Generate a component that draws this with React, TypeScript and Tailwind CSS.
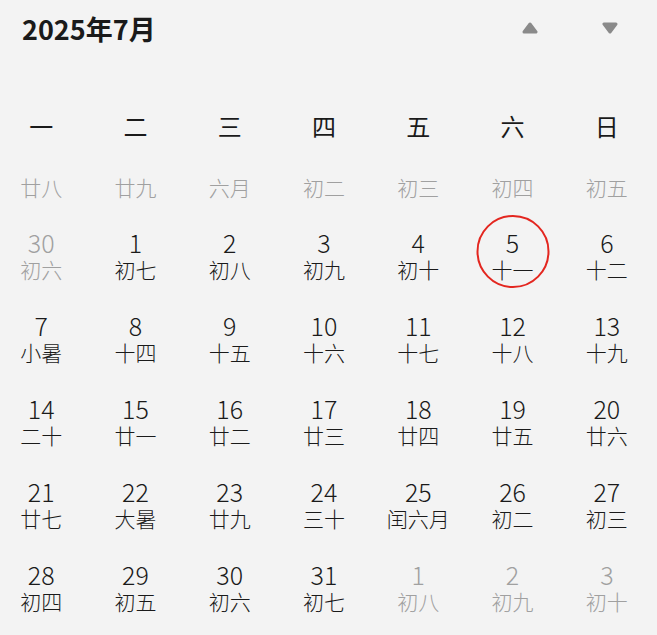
import React from "react";

type Day = { d: number; l: string; muted?: boolean; today?: boolean };

const weekdays = ["一", "二", "三", "四", "五", "六", "日"];
const prevLunar = ["廿八", "廿九", "六月", "初二", "初三", "初四", "初五"];

const weeks: Day[][] = [
  [
    { d: 30, l: "初六", muted: true },
    { d: 1, l: "初七" },
    { d: 2, l: "初八" },
    { d: 3, l: "初九" },
    { d: 4, l: "初十" },
    { d: 5, l: "十一", today: true },
    { d: 6, l: "十二" },
  ],
  [
    { d: 7, l: "小暑" },
    { d: 8, l: "十四" },
    { d: 9, l: "十五" },
    { d: 10, l: "十六" },
    { d: 11, l: "十七" },
    { d: 12, l: "十八" },
    { d: 13, l: "十九" },
  ],
  [
    { d: 14, l: "二十" },
    { d: 15, l: "廿一" },
    { d: 16, l: "廿二" },
    { d: 17, l: "廿三" },
    { d: 18, l: "廿四" },
    { d: 19, l: "廿五" },
    { d: 20, l: "廿六" },
  ],
  [
    { d: 21, l: "廿七" },
    { d: 22, l: "大暑" },
    { d: 23, l: "廿九" },
    { d: 24, l: "三十" },
    { d: 25, l: "闰六月" },
    { d: 26, l: "初二" },
    { d: 27, l: "初三" },
  ],
  [
    { d: 28, l: "初四" },
    { d: 29, l: "初五" },
    { d: 30, l: "初六" },
    { d: 31, l: "初七" },
    { d: 1, l: "初八", muted: true },
    { d: 2, l: "初九", muted: true },
    { d: 3, l: "初十", muted: true },
  ],
];

const font = { fontFamily: '"Noto Sans CJK SC", "Noto Sans", sans-serif' };

export default function App() {
  return (
    <div
      className="w-[657px] h-[635px] overflow-hidden bg-[#f3f3f3] text-[#1a1a1a]"
      style={font}
    >
      {/* Header */}
      <div className="h-[56px] flex items-center justify-between pl-[22px] pr-[39px]">
        <div className="text-[27px] leading-none font-semibold">
          2025年7月
        </div>
        <div className="flex items-center gap-[64px]">
          <svg width="16" height="12" viewBox="0 0 16 12">
            <polygon
              points="8,2 14,10 2,10"
              fill="#8a8a8a"
              stroke="#8a8a8a"
              strokeWidth="3"
              strokeLinejoin="round"
            />
          </svg>
          <svg width="16" height="12" viewBox="0 0 16 12">
            <polygon
              points="2,2 14,2 8,10"
              fill="#8a8a8a"
              stroke="#8a8a8a"
              strokeWidth="3"
              strokeLinejoin="round"
            />
          </svg>
        </div>
      </div>

      <div className="w-[648px] font-light">
        {/* Weekday row */}
        <div className="mt-[48px] grid grid-cols-7 gap-x-3 h-[44px] items-center">
          {weekdays.map((w) => (
            <div key={w} className="text-center text-[24px] leading-[44px] font-normal text-[#1a1a1a]">
              {w}
            </div>
          ))}
        </div>

        {/* Partially scrolled previous week */}
        <div className="mt-[25.5px] grid grid-cols-7 gap-x-3">
          {prevLunar.map((l) => (
            <div key={l} className="text-center text-[21px] leading-[27px] text-[#a0a0a0]">
              {l}
            </div>
          ))}
        </div>

        {/* Date grid */}
        <div className="mt-[28.5px] grid grid-cols-7 gap-x-3 gap-y-[29px]">
          {weeks.flat().map((day, i) => (
            <div
              key={i}
              className={`relative flex flex-col items-center ${
                day.muted ? "text-[#a0a0a0]" : "text-[#1a1a1a]"
              }`}
            >
              {day.today && (
                <div className="absolute left-1/2 -translate-x-1/2 top-[-14px] w-[73px] h-[73px] rounded-full border-[2.5px] border-[#e3261f]" />
              )}
              <div className="text-[25px] leading-[27px]">{day.d}</div>
              <div className="text-[21px] leading-[27px]">{day.l}</div>
            </div>
          ))}
        </div>
      </div>
    </div>
  );
}
